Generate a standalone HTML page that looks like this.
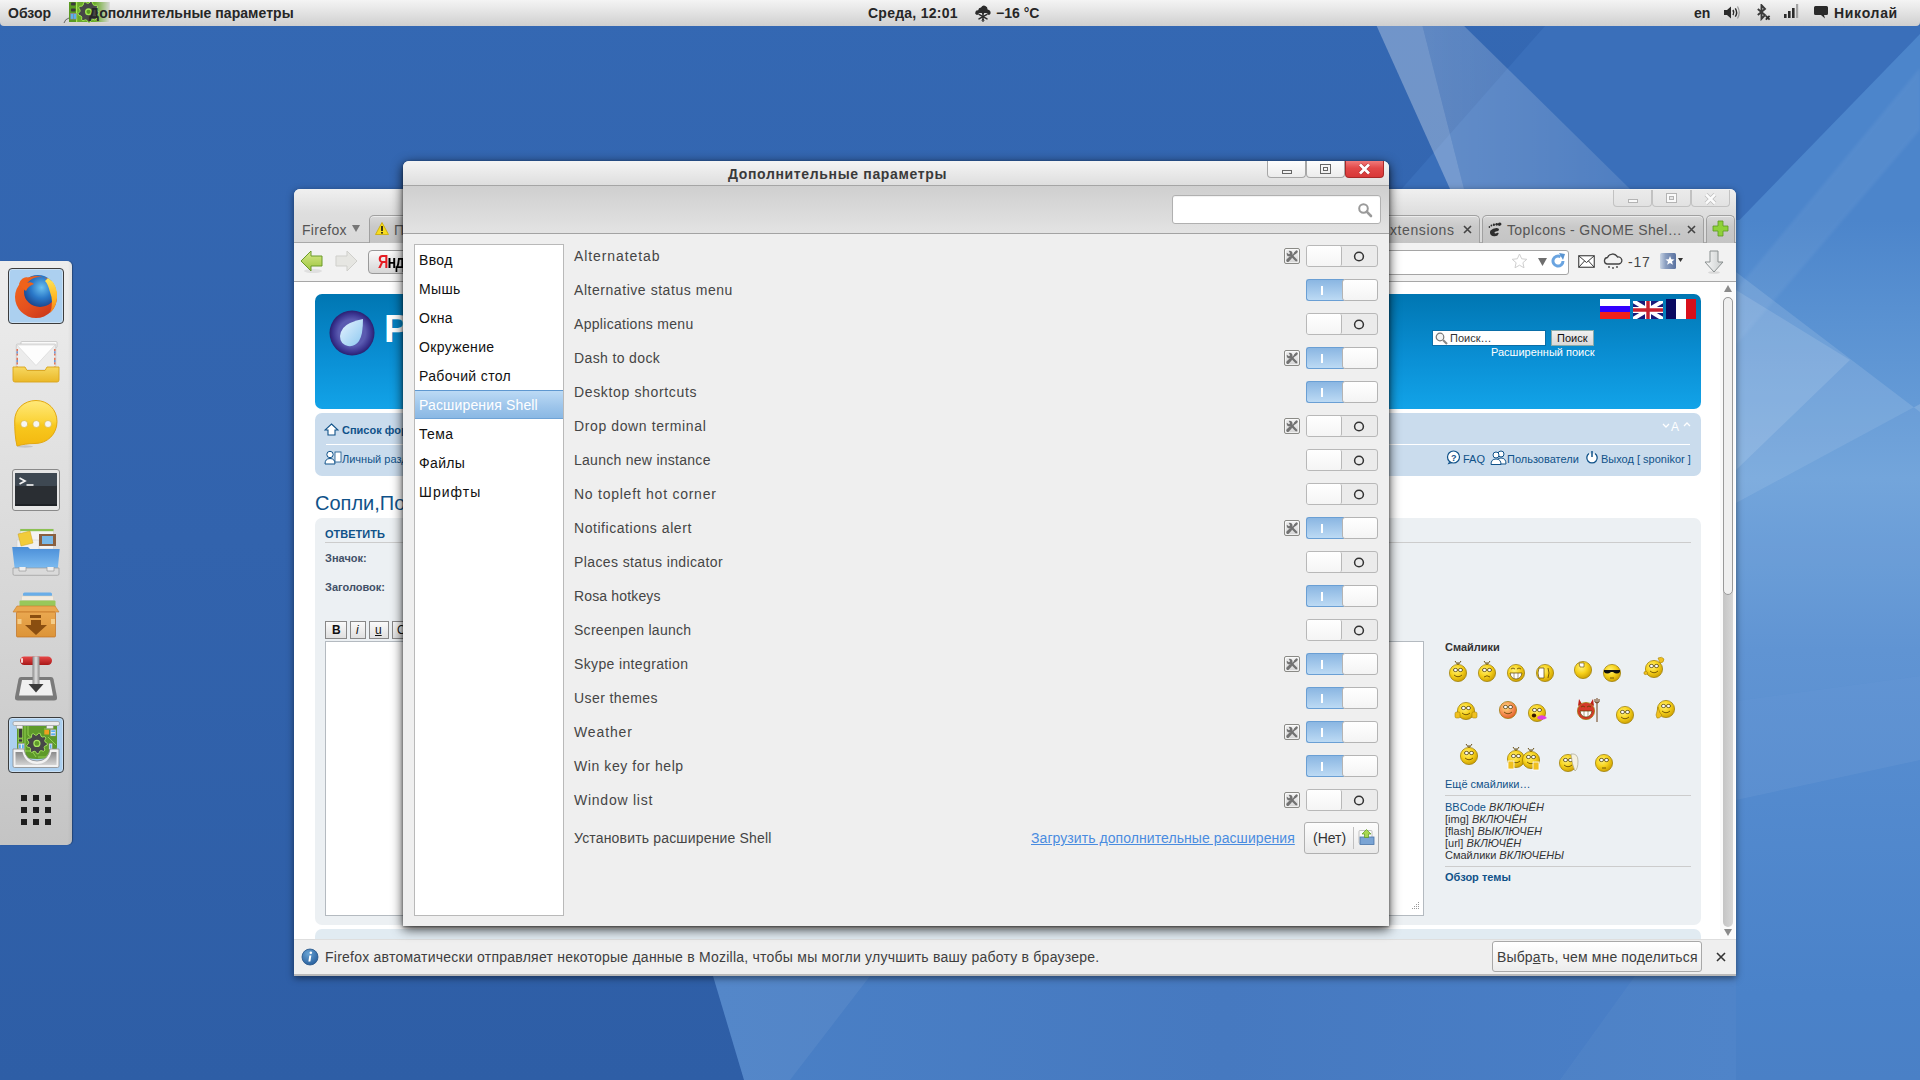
<!DOCTYPE html>
<html><head><meta charset="utf-8">
<style>
*{box-sizing:border-box}
html,body{margin:0;padding:0}
body{width:1920px;height:1080px;overflow:hidden;position:relative;background:#356bb2;font-family:"Liberation Sans",sans-serif}
.a{position:absolute}
.nw{white-space:nowrap}
#bg{position:absolute;left:0;top:0}
/* top panel */
#panel{position:absolute;left:0;top:0;width:1920px;height:26px;background:linear-gradient(#f4f4f4,#e6e6e6 40%,#cfcfcf);border-radius:0 0 4px 4px;color:#262626;font-size:14px}
#panel .t{position:absolute;top:5px;white-space:nowrap}
/* dock */
#dock{position:absolute;left:0;top:261px;width:72px;height:584px;background:linear-gradient(90deg,rgba(0,0,0,0) 94%,rgba(0,0,0,.05)),linear-gradient(#ededed,#e8e8e8 15%,#d6d6d6 60%,#c4c4c4);border-radius:0 5px 5px 0;box-shadow:1px 0 1px rgba(0,0,0,.3)}
#dock .sel{position:absolute;left:8px;width:56px;height:56px;border:1.5px solid #3c3c3c;border-radius:4px;background:#acd0f0;box-shadow:inset 0 0 0 1px rgba(255,255,255,.35)}
/* firefox */
#ff{position:absolute;left:294px;top:189px;width:1442px;height:787px;background:#f2f2f2;border-radius:6px 6px 0 0;box-shadow:0 2px 7px rgba(0,0,0,.5);border-bottom:2px solid #b9b9b9}
/* dialog */
#dlg{position:absolute;left:403px;top:161px;width:986px;height:765px;background:#efefef;border-radius:6px 6px 0 0;box-shadow:0 3px 12px rgba(0,0,0,.8),0 1px 3px rgba(0,0,0,.45)}
#dlg .title{position:absolute;left:0;top:0;width:986px;height:25px;background:linear-gradient(#f4f4f4,#dedede);border-radius:6px 6px 0 0;border-bottom:1px solid #a5a5a5}
#dlg .tb{position:absolute;left:0;top:25px;width:986px;height:48px;background:linear-gradient(#cfcfcf,#e3e3e3);border-bottom:1px solid #a3a3a3}
.row{position:absolute;left:171px;font-size:14px;color:#454545;letter-spacing:.55px;white-space:nowrap}
.sw{position:absolute;left:903px;width:72px;height:22px;border:1px solid #b8b8b8;border-radius:3px;background:#ebebeb}
.sw .k{position:absolute;top:0;height:20px;width:35px;background:linear-gradient(#fff,#f5f5f5);border-radius:2px}
.sw.off .k{left:0;border-right:1px solid #b8b8b8}
.sw .o{position:absolute;left:47px;top:5px;width:11px;height:11px;border:1.7px solid #2a2a2a;border-radius:50%}
.sw.on{border:none;background:transparent}
.sw.on .bl{position:absolute;left:0;top:0;width:38px;height:22px;background:linear-gradient(#8ab6e2,#bcdaf4);border:1px solid #6a9fd4;border-right:none;border-radius:3px 0 0 3px}
.sw.on .bl:after{content:"";position:absolute;left:14px;top:6px;width:1.6px;height:9px;background:#fff}
.sw.on .k{left:36px;top:0;width:36px;height:22px;border:1px solid #b4b4b4;border-radius:3px;background:linear-gradient(#fff,#f4f4f4)}
.gear{position:absolute;left:881px;width:16px;height:16px;border:1px solid #8a8a86;border-radius:2px;background:linear-gradient(#f4f4f4,#d6d6d6);box-shadow:inset 0 0 0 1px rgba(255,255,255,.6)}
.side{position:absolute;left:11px;top:83px;width:150px;height:672px;background:#fff;border:1px solid #b9b9b9}
.side .it{position:absolute;left:5px;font-size:14px;color:#111;letter-spacing:.35px;white-space:nowrap}
.wb{position:absolute;top:0;height:17px;border:1px solid #a7a7a7;border-top:none;background:linear-gradient(#fdfdfd,#ececec)}
</style></head>
<body>
<svg id="bg" width="1920" height="1080" viewBox="0 0 1920 1080">
<defs>
<linearGradient id="bgg" x1="0" y1="0" x2="0" y2="1">
<stop offset="0" stop-color="#3468b3"/><stop offset=".5" stop-color="#3263ad"/><stop offset="1" stop-color="#2e5ea6"/>
</linearGradient>
<linearGradient id="rs" x1="0" y1="0" x2="0" y2="1">
<stop offset="0" stop-color="#4c85cb"/><stop offset=".12" stop-color="#5a92d2"/><stop offset=".3" stop-color="#6ea2da"/><stop offset=".5" stop-color="#5a90d2"/><stop offset=".9" stop-color="#4a82c9"/><stop offset="1" stop-color="#4a80c6"/>
</linearGradient>
<linearGradient id="bt" x1="0" y1="0" x2="1" y2="0">
<stop offset="0" stop-color="#4a80c6"/><stop offset=".5" stop-color="#4679c0"/><stop offset="1" stop-color="#4a80c8"/>
</linearGradient>
<linearGradient id="beam" x1="0" y1="0" x2="1" y2="0"><stop offset="0" stop-color="#fff" stop-opacity=".24"/><stop offset="1" stop-color="#fff" stop-opacity=".12"/></linearGradient>
<filter id="soft" x="-10%" y="-10%" width="120%" height="120%"><feGaussianBlur stdDeviation="1.5"/></filter>
</defs>
<rect width="1920" height="1080" fill="url(#bgg)"/>
<polygon points="1545,26 1920,26 1920,976 709,976" fill="#3a6fba"/>
<polygon points="1920,34 1920,976 1006,976" fill="#4c85cb"/>
<polygon points="1421,20 1458,20 1630,189 1464,189" fill="url(#beam)" opacity=".9"/>
<polygon points="1374,20 1421,20 1464,189 1450,189" fill="#fff" opacity=".3"/>
<rect x="1736" y="220" width="184" height="860" fill="url(#rs)"/>
<polygon points="1920,68 1920,130 1736,345 1736,290" fill="#fff" opacity=".05" filter="url(#soft)"/>
<polygon points="1736,272 1920,412 1920,404 1736,503" fill="#fff" opacity=".12"/>
<polygon points="1736,290 1850,360 1736,470" fill="#fff" opacity=".12"/>
<polygon points="1736,503 1920,404 1920,676 1736,701" fill="#fff" opacity=".04"/>
<polygon points="1736,701 1920,676 1920,760 1736,800" fill="#fff" opacity=".05"/>
<!-- bottom -->
<polygon points="713,976 1736,976 1736,1080 744,1080" fill="url(#bt)"/>
<polygon points="713,976 870,976 790,1080 744,1080" fill="#fff" opacity=".06"/>
<polygon points="1635,976 1736,976 1736,1080 1560,1080" fill="#fff" opacity=".03"/>
</svg>
<div id="panel">
  <div class="t" style="left:8px;font-weight:bold">Обзор</div>
  <svg class="a" style="left:62px;top:2px" width="48" height="21" viewBox="0 0 48 21">
    <defs><linearGradient id="fadeg" x1="0" x2="1"><stop offset="0" stop-color="#dcdcdc" stop-opacity="0"/><stop offset="1" stop-color="#d8d8d8" stop-opacity="1"/></linearGradient></defs>
    <rect x="7" y="0" width="40" height="20" fill="#6aaa2a"/>
    <rect x="7" y="0" width="8" height="20" fill="#5a9a22"/>
    <rect x="14" y="0" width="1.2" height="20" fill="#a8e850"/>
    <rect x="9" y="0.5" width="4.5" height="3" rx=".8" fill="#3a3a3a"/><rect x="9" y="6.5" width="4.5" height="3" rx=".8" fill="#3a3a3a"/>
    <rect x="8.2" y="11" width="6.4" height="6.5" fill="#888"/>
    <rect x="8.8" y="12" width="2.3" height="4.8" fill="#5ab0f0"/><rect x="11.8" y="12" width="2.3" height="4.8" fill="#5ab0f0"/>
    <path d="M28.59,-0.49 L30.34,0.03 L30.99,2.46 L32.19,3.35 L34.71,3.26 L35.72,4.78 L34.65,7.07 L35.00,8.52 L37.00,10.07 L36.79,11.89 L34.50,12.95 L33.84,14.29 L34.37,16.75 L33.04,18.01 L30.61,17.35 L29.23,17.95 L28.06,20.18 L26.23,20.30 L24.79,18.23 L23.35,17.80 L21.02,18.76 L19.55,17.67 L19.77,15.16 L18.95,13.91 L16.54,13.14 L16.12,11.36 L17.90,9.58 L18.07,8.09 L16.73,5.96 L17.54,4.32 L20.05,4.11 L21.14,3.07 L21.48,0.58 L23.16,-0.16 L25.22,1.30 L26.72,1.20 Z" fill="#474747" stroke="#a0e850" stroke-width="1"/>
    <circle cx="26.5" cy="9.8" r="2.8" fill="#5a9a22" stroke="#a0e850" stroke-width="1.4"/>
    <rect x="33" y="0" width="15" height="21" fill="url(#fadeg)"/>
    <path d="M2,21 Q3,17 7,16" stroke="#666" fill="none" stroke-width="1"/>
  </svg>
  <div class="t" style="left:89px;font-weight:bold;letter-spacing:.05px">Дополнительные параметры</div>
  <div class="t" style="left:868px;font-weight:bold;letter-spacing:.25px">Среда, 12:01</div>
  <svg class="a" style="left:974px;top:3px" width="18" height="19" viewBox="0 0 18 19">
    <path d="M2.3,11.8 Q0.3,10.5 1.6,8.4 Q2.4,7.2 4,7.4 Q4.6,4.6 7,4.6 Q8.6,1.8 11.4,2.9 Q13.6,3.8 13.6,6.6 Q16.8,7.2 16.6,10.2 Q16.4,12 14.6,12 L12.8,10 H5.2 L3.4,12 Z" fill="#2b2b2b"/>
    <g stroke="#2b2b2b" stroke-width="1.5" stroke-linecap="round"><line x1="9" y1="9" x2="9" y2="18.2"/><line x1="5" y1="11.3" x2="13" y2="15.9"/><line x1="13" y1="11.3" x2="5" y2="15.9"/></g>
    <g stroke="#2b2b2b" stroke-width="1" fill="none"><path d="M7.6,9.8 L9,11 L10.4,9.8 M7.6,17.4 L9,16.2 L10.4,17.4"/></g>
  </svg>
  <div class="t" style="left:996px;font-weight:bold">−16 °C</div>
  <div class="t" style="left:1694px;font-weight:bold">en</div>
  <svg class="a" style="left:1723px;top:5px" width="17" height="15" viewBox="0 0 17 15">
    <path d="M1,5 H4 L8,1.5 V13.5 L4,10 H1 Z" fill="#2b2b2b"/>
    <path d="M10,5 Q11.5,7.5 10,10" stroke="#2b2b2b" stroke-width="1.6" fill="none"/>
    <path d="M12.3,3.3 Q15,7.5 12.3,11.7" stroke="#2b2b2b" stroke-width="1.4" fill="none"/>
    <path d="M14.5,1.5 Q18,7.5 14.5,13.5" stroke="#9a9a9a" stroke-width="1.2" fill="none"/>
  </svg>
  <svg class="a" style="left:1755px;top:4px" width="17" height="17" viewBox="0 0 17 17">
    <path d="M2.8,5 L10,11 L6.5,14.8 V1.2 L10,5 L2.8,11" stroke="#3a3a3a" stroke-width="1.9" fill="none"/>
    <path d="M10.8,11.8 L14.6,15.6 M14.6,11.8 L10.8,15.6" stroke="#2b2b2b" stroke-width="1.8"/>
  </svg>
  <svg class="a" style="left:1783px;top:3px" width="17" height="17" viewBox="0 0 17 17">
    <rect x="1" y="11" width="2.6" height="4" fill="#2b2b2b"/><rect x="5" y="8" width="2.6" height="7" fill="#2b2b2b"/>
    <rect x="9" y="5" width="2.6" height="10" fill="#2b2b2b"/><rect x="13" y="1" width="2.2" height="14" fill="#a3a3a3"/>
  </svg>
  <svg class="a" style="left:1813px;top:5px" width="16" height="15" viewBox="0 0 16 15">
    <path d="M2.5,1 H13.5 Q15,1 15,2.5 V8.5 Q15,10 13.5,10 H11 L12,13.5 L8,10 H2.5 Q1,10 1,8.5 V2.5 Q1,1 2.5,1 Z" fill="#2b2b2b"/>
  </svg>
  <div class="t" style="left:1834px;font-weight:bold;letter-spacing:.7px">Николай</div>
</div>
<div id="dock">
  <div class="sel" style="top:7px"></div>
  <!-- firefox -->
  <svg class="a" style="left:12px;top:11px" width="48" height="48" viewBox="0 0 48 48">
    <defs>
      <radialGradient id="ffglobe" cx=".6" cy=".35" r=".6"><stop offset="0" stop-color="#6ac0f0"/><stop offset=".5" stop-color="#2a78c8"/><stop offset="1" stop-color="#1a3c80"/></radialGradient>
      <linearGradient id="fffox" x1="0" y1="0" x2=".8" y2="1"><stop offset="0" stop-color="#f26a1c"/><stop offset=".6" stop-color="#e5501e"/><stop offset="1" stop-color="#c8361a"/></linearGradient>
      <linearGradient id="fftail" x1="0" y1="0" x2="0" y2="1"><stop offset="0" stop-color="#ffe55a"/><stop offset=".6" stop-color="#ffb41e"/><stop offset="1" stop-color="#f57a1c"/></linearGradient>
    </defs>
    <circle cx="26" cy="21" r="18" fill="url(#ffglobe)"/>
    <path fill-rule="evenodd" d="M3,25 A21,21 0 1 0 45,25 A21,21 0 1 0 3,25 Z M12,20 A16,15 0 1 0 44,20 A16,15 0 1 0 12,20 Z" fill="url(#fffox)"/>
    <path d="M7,12 Q9,5 16,5 Q13,8 15,11 Q19,9 22,12 Q16,14 14,19 Q10,17 7,12 Z" fill="#f0621a"/>
    <path d="M36,6 Q46,12 45,26 Q44,36 38,41 Q42,30 38,20 Q36,12 33,9 Z" fill="url(#fftail)"/>
  </svg>
  <!-- mail -->
  <svg class="a" style="left:12px;top:80px" width="48" height="44" viewBox="0 0 48 44">
    <defs><linearGradient id="trayy" x1="0" y1="0" x2="0" y2="1"><stop offset="0" stop-color="#f7d860"/><stop offset="1" stop-color="#eab828"/></linearGradient></defs>
    <rect x="9" y="0.5" width="36" height="6" rx="1" fill="#fafafa" stroke="#bbb" stroke-width=".7"/>
    <rect x="4.3" y="3" width="39.5" height="26" rx="1" fill="#ececec" stroke="#c4c4c4" stroke-width=".7"/>
    <path d="M5,4 L24,24.5 L43,4 Z" fill="#fdfdfd" stroke="#d4d4d4" stroke-width=".6"/>
    <path d="M5.2,8 V27 M42.8,8 V27" stroke="#e06040" stroke-dasharray="2.2,2.2" stroke-width="1.3"/>
    <path d="M5.2,10.2 V27 M42.8,10.2 V27" stroke="#5a8ad8" stroke-dasharray="2.2,6.6" stroke-width="1.3"/>
    <path d="M1,26 H13 L15,29.5 H33 L35,26 H47 V39 Q47,41 45,41 H3 Q1,41 1,39 Z" fill="url(#trayy)" stroke="#d9a41c" stroke-width=".9"/>
  </svg>
  <!-- chat -->
  <svg class="a" style="left:13px;top:139px" width="46" height="48" viewBox="0 0 46 48">
    <defs><linearGradient id="chatg" x1="0" y1="0" x2="0" y2="1"><stop offset="0" stop-color="#ffe97a"/><stop offset=".45" stop-color="#fbd43a"/><stop offset=".55" stop-color="#f8c81e"/><stop offset="1" stop-color="#f3b810"/></linearGradient></defs>
    <ellipse cx="12" cy="46.5" rx="8" ry="1.2" fill="#000" opacity=".12"/>
    <path d="M4,46 C2,38 1.7,28 1.7,21 C1.7,9 11,0.5 23,0.5 C35,0.5 44,9.5 44,21.5 C44,34 34.5,43.5 22,43.5 C15,43.5 9,44.5 4,46 Z" fill="url(#chatg)" stroke="#e2a812" stroke-width="1"/>
    <circle cx="11.2" cy="24" r="3.5" fill="#f6f6f6" stroke="#d9b440" stroke-width=".7"/><circle cx="23.3" cy="24" r="3.5" fill="#f6f6f6" stroke="#d9b440" stroke-width=".7"/><circle cx="35" cy="24" r="3.5" fill="#f6f6f6" stroke="#d9b440" stroke-width=".7"/>
  </svg>
  <!-- terminal -->
  <svg class="a" style="left:12px;top:208px" width="48" height="42" viewBox="0 0 48 42">
    <rect x="0.5" y="0.5" width="47" height="41" rx="2.5" fill="#e6e6e6" stroke="#8a8a8a"/>
    <rect x="3" y="4" width="42" height="33" rx="1" fill="#2a2e33"/>
    <rect x="3" y="4" width="42" height="13" rx="1" fill="#3e4852"/>
    <rect x="3" y="35" width="42" height="2" fill="#1e2226"/>
    <path d="M7.5,9 L13,12 L7.5,15" stroke="#f4f4f4" stroke-width="1.7" fill="none"/><rect x="14.5" y="15.2" width="7" height="1.6" fill="#f4f4f4"/>
  </svg>
  <!-- files -->
  <svg class="a" style="left:11px;top:267px" width="50" height="48" viewBox="0 0 50 48">
    <defs><linearGradient id="fldg" x1="0" y1="0" x2="0" y2="1"><stop offset="0" stop-color="#4a8ed8"/><stop offset="1" stop-color="#84c2f4"/></linearGradient></defs>
    <rect x="9.2" y="1" width="33.3" height="20" fill="#f4f4f4" stroke="#ccc" stroke-width=".6"/>
    <rect x="9.2" y="1" width="33.3" height="2.2" fill="#8cc152"/>
    <rect x="6" y="12" width="22" height="10" fill="#f0f0f0" stroke="#ccc" stroke-width=".5"/>
    <path d="M7,6 L19,3 L22,15 L10,18 Z" fill="#f2cc3a" stroke="#c8a020" stroke-width=".5"/>
    <rect x="28" y="6" width="17" height="12" fill="#8a6040"/>
    <rect x="31" y="8" width="11" height="8" fill="#78b8e8"/>
    <path d="M1.2,19 H17 L19,21 H48.7 L46.5,43.4 H4 Z" fill="url(#fldg)"/>
    <path d="M2,40 H48 V46 Q48,47.3 46.5,47.3 H3.5 Q2,47.3 2,46 Z" fill="#dadada" stroke="#999" stroke-width=".7"/>
    <path d="M8,39 V43 H15 V39 M36,39 V43 H43 V39" stroke="#999" stroke-width=".7" fill="#eee"/>
  </svg>
  <!-- archive -->
  <svg class="a" style="left:11px;top:331px" width="50" height="48" viewBox="0 0 50 48">
    <defs><linearGradient id="boxg" x1="0" y1="0" x2="0" y2="1"><stop offset="0" stop-color="#eaa850"/><stop offset="1" stop-color="#dc9438"/></linearGradient></defs>
    <rect x="12" y="0.5" width="29" height="4" rx="1.5" fill="#6aaee8"/>
    <rect x="10.5" y="4" width="32" height="4.5" rx="1" fill="#f2ebe0" stroke="#d8ccb8" stroke-width=".5"/>
    <rect x="8.5" y="8.5" width="36" height="7" rx="1" fill="#98c85a"/>
    <path d="M2,20 L6,14 H44 L48,20 Z" fill="#eaa850" stroke="#c87a28" stroke-width=".6"/>
    <rect x="5.5" y="20" width="39" height="25" rx="1" fill="url(#boxg)" stroke="#c07020" stroke-width=".7"/>
    <rect x="6.5" y="27" width="4" height="5" fill="#f4cc88"/><rect x="40" y="27" width="4" height="5" fill="#f4cc88"/>
    <rect x="19" y="23" width="11" height="3" fill="#8a4e10"/>
    <path d="M20,28 H30 V33 H36 L25,43 L14,33 H20 Z" fill="#8a4e10"/>
  </svg>
  <!-- install -->
  <svg class="a" style="left:12px;top:394px" width="48" height="48" viewBox="0 0 48 48">
    <defs><linearGradient id="instg" x1="0" y1="0" x2="1" y2="0"><stop offset="0" stop-color="#8a8a8a"/><stop offset=".5" stop-color="#e0e0e0"/><stop offset="1" stop-color="#8a8a8a"/></linearGradient>
    <linearGradient id="redg" x1="0" y1="0" x2="0" y2="1"><stop offset="0" stop-color="#e84848"/><stop offset="1" stop-color="#a81818"/></linearGradient></defs>
    <path d="M9,22 H39 Q41,22 41.5,24 L45,42 Q45.5,45.5 42,45.5 H6 Q2.5,45.5 3,42 L6.5,24 Q7,22 9,22 Z" fill="#7a7a7a"/>
    <path d="M10,25 H38 L41,40.5 H7 Z" fill="#f0f0f0"/>
    <rect x="20.5" y="6" width="7" height="26" fill="url(#instg)"/>
    <path d="M16.5,29 H31.5 L24,37.5 Z" fill="#3a3a3a"/>
    <rect x="8" y="1.5" width="32" height="8.5" rx="4.2" fill="url(#redg)"/>
    <rect x="20.5" y="1.5" width="7" height="8.5" fill="url(#instg)"/>
    <rect x="9" y="3" width="2" height="5" rx="1" fill="#fff" opacity=".8"/>
  </svg>
  <!-- tweak selected -->
  <div class="sel" style="top:456px"></div>
  <svg class="a" style="left:12px;top:460px" width="48" height="48" viewBox="0 0 48 48">
    <defs><linearGradient id="trayg" x1="0" y1="0" x2="0" y2="1"><stop offset="0" stop-color="#8a8a8a"/><stop offset="1" stop-color="#d4d4d4"/></linearGradient></defs>
    <path d="M5,5 H45 V26 Q45,38 25,38 Q5,38 5,26 Z" fill="#5e9a2a"/>
    <g stroke="#a8e860" stroke-width=".7" fill="none">
      <path d="M13,5 V40 M16,5 V14 L20,17 M32,8 H40 M36,16 L44,24 M12,30 H20 L24,36 M40,28 L34,36 H26"/>
    </g>
    <rect x="6.5" y="7.5" width="4.2" height="9.5" fill="#3a3a3a" stroke="#a8e860" stroke-width=".6"/>
    <rect x="6.5" y="18" width="4.2" height="3" fill="#3a3a3a" stroke="#a8e860" stroke-width=".6"/>
    <path d="M26.66,12.15 L28.41,12.61 L29.02,15.19 L30.21,16.02 L32.84,15.68 L33.88,17.16 L32.69,19.53 L33.07,20.92 L35.30,22.35 L35.15,24.16 L32.71,25.20 L32.11,26.52 L32.90,29.05 L31.62,30.34 L29.08,29.57 L27.77,30.19 L26.75,32.63 L24.95,32.80 L23.50,30.58 L22.10,30.21 L19.74,31.43 L18.25,30.40 L18.57,27.76 L17.73,26.58 L15.14,26.00 L14.67,24.25 L16.60,22.44 L16.72,21.00 L15.11,18.89 L15.87,17.24 L18.52,17.09 L19.54,16.07 L19.66,13.42 L21.30,12.64 L23.42,14.23 L24.86,14.10 Z" fill="#474747" stroke="#a8e860" stroke-width=".9"/>
    <circle cx="24.9" cy="22.4" r="3" fill="#5e9a2a" stroke="#a8e860" stroke-width="1.2"/>
    <rect x="32.3" y="8.8" width="4.7" height="4.7" fill="#f0a020"/>
    <rect x="6.2" y="22.4" width="6.2" height="6" fill="#eee" stroke="#888" stroke-width=".5"/><rect x="7" y="23.5" width="1.8" height="4" fill="#5ab0f0"/><rect x="10" y="23.5" width="1.8" height="4" fill="#5ab0f0"/>
    <rect x="37" y="22.4" width="3.2" height="6" fill="#eee" stroke="#888" stroke-width=".5"/><rect x="37.8" y="23.5" width="1.6" height="4" fill="#5ab0f0"/>
    <rect x="38.4" y="8.5" width="5.5" height="6.5" fill="#eee" stroke="#888" stroke-width=".5"/><rect x="39.2" y="9.3" width="4" height="1.8" fill="#5ab0f0"/><rect x="39.2" y="12.3" width="4" height="1.8" fill="#5ab0f0"/>
    <rect x="1" y="0.5" width="46.5" height="4" rx="1.5" fill="#ececec" stroke="#9a9a9a" stroke-width=".7"/>
    <rect x="4.3" y="4.5" width="6.5" height="3" fill="#eee" stroke="#9a9a9a" stroke-width=".5"/><rect x="34.7" y="4.5" width="6.5" height="3" fill="#eee" stroke="#9a9a9a" stroke-width=".5"/>
    <path d="M1,28 H12 Q14,40 25,40 Q36,40 38,28 H47 V45 Q47,46.5 45.5,46.5 H2.5 Q1,46.5 1,45 Z" fill="#f2f2f2" stroke="#8a8a8a" stroke-width=".8"/>
    <path d="M3.5,31 H10.5 Q13.5,43 25,43 Q36.5,43 39.5,31 H44.5 V44 H3.5 Z" fill="url(#trayg)"/>
  </svg>
  <!-- grid -->
  <svg class="a" style="left:20px;top:533px" width="32" height="32" viewBox="0 0 32 32">
    <g fill="#1e1e1e">
    <rect x="1" y="1" width="6" height="6"/><rect x="13" y="1" width="6" height="6"/><rect x="25" y="1" width="6" height="6"/>
    <rect x="1" y="13" width="6" height="6"/><rect x="13" y="13" width="6" height="6"/><rect x="25" y="13" width="6" height="6"/>
    <rect x="1" y="25" width="6" height="6"/><rect x="13" y="25" width="6" height="6"/><rect x="25" y="25" width="6" height="6"/>
    </g>
  </svg>
</div>
<div id="ff">
  <!-- title+tab strip bg -->
  <div class="a" style="left:0;top:0;width:1442px;height:54px;background:linear-gradient(#f0f0f0,#dedede 45%,#d9d9d9);border-radius:6px 6px 0 0;border-bottom:1px solid #a9a9a9"></div>
  <!-- title buttons (inactive) -->
  <div class="a" style="left:1319px;top:1px;width:39px;height:17px;border:1px solid #c2c2c2;border-top:none;border-radius:0 0 4px 4px;background:linear-gradient(#ebebeb,#e2e2e2)"><div class="a" style="left:14px;top:9px;width:10px;height:4px;border:1px solid #b4b4b4;background:#fafafa"></div></div>
  <div class="a" style="left:1358px;top:1px;width:39px;height:17px;border:1px solid #c2c2c2;border-top:none;border-radius:0 0 4px 4px;background:linear-gradient(#ebebeb,#e2e2e2)"><div class="a" style="left:13px;top:3px;width:11px;height:10px;border:1px solid #b4b4b4;background:#fafafa"><div class="a" style="left:2px;top:2px;width:5px;height:4px;border:1px solid #b4b4b4;background:#e6e6e6"></div></div></div>
  <div class="a" style="left:1397px;top:1px;width:39px;height:17px;border:1px solid #c2c2c2;border-top:none;border-radius:0 0 4px 4px;background:linear-gradient(#ebebeb,#e2e2e2)"><svg class="a" style="left:12px;top:3px" width="13" height="12" viewBox="0 0 13 12"><path d="M2,1.5 L11,10.5 M11,1.5 L2,10.5" stroke="#bdbdbd" stroke-width="4"/><path d="M2,1.5 L11,10.5 M11,1.5 L2,10.5" stroke="#fbfbfb" stroke-width="2.6"/></svg></div>
  <div class="a nw" style="left:8px;top:33px;font-size:14px;color:#555;letter-spacing:.3px">Firefox</div>
  <svg class="a" style="left:58px;top:36px" width="8" height="8" viewBox="0 0 8 8"><path d="M0,0 H8 L4,7 Z" fill="#777"/></svg>
  <!-- tab 1 (behind dialog) -->
  <div class="a" style="left:75px;top:26px;width:60px;height:28px;background:linear-gradient(#d8d8d8,#c9c9c9 40%,#c4c4c4);border:1px solid #a0a0a0;border-bottom:none;border-radius:5px 5px 0 0;box-shadow:inset 0 1px 0 rgba(255,255,255,.5)"></div>
  <svg class="a" style="left:81px;top:33px" width="14" height="13" viewBox="0 0 14 13"><path d="M7,0.5 L13.5,12.5 H0.5 Z" fill="#f7dc20" stroke="#c9a800" stroke-width=".8"/><rect x="6.2" y="4" width="1.6" height="5" fill="#111"/><rect x="6.2" y="10" width="1.6" height="1.6" fill="#111"/></svg>
  <div class="a nw" style="left:100px;top:33px;font-size:14px;color:#555">П</div>
  <!-- tab xtensions -->
  <div class="a" style="left:1060px;top:26px;width:126px;height:28px;background:linear-gradient(#d8d8d8,#c9c9c9 40%,#c4c4c4);border:1px solid #a0a0a0;border-bottom:none;border-radius:5px 5px 0 0;box-shadow:inset 0 1px 0 rgba(255,255,255,.5)"></div>
  <div class="a nw" style="left:1096px;top:33px;font-size:14px;color:#555;letter-spacing:.6px">xtensions</div>
  <svg class="a" style="left:1169px;top:36px" width="9" height="9" viewBox="0 0 9 9"><path d="M1,1 L8,8 M8,1 L1,8" stroke="#444" stroke-width="1.6"/></svg>
  <!-- tab topicons -->
  <div class="a" style="left:1188px;top:26px;width:222px;height:28px;background:linear-gradient(#d8d8d8,#c9c9c9 40%,#c4c4c4);border:1px solid #a0a0a0;border-bottom:none;border-radius:5px 5px 0 0;box-shadow:inset 0 1px 0 rgba(255,255,255,.5)"></div>
  <svg class="a" style="left:1194px;top:33px" width="14" height="15" viewBox="0 0 14 15"><g fill="#2e2e2e"><ellipse cx="1.4" cy="5" rx=".8" ry=".9"/><ellipse cx="3.4" cy="3.6" rx=".9" ry="1"/><ellipse cx="5.9" cy="2.7" rx="1.1" ry="1.2"/><ellipse cx="8.7" cy="2.3" rx="1.3" ry="1.4"/><ellipse cx="11.6" cy="2.2" rx="1.8" ry="1.6" transform="rotate(-30 11.6 2.2)"/><path d="M2.5,8.5 Q5,5.8 9,6 Q11.5,6.3 11,8 Q10.5,9.3 8,9.6 Q6.3,9.9 6.5,11 Q7,12 9.5,10.8 Q10.8,10.3 10.6,11.8 Q9.8,14.5 6.2,14.3 Q2.3,14 2,11 Q1.8,9.6 2.5,8.5 Z"/></g></svg>
  <div class="a nw" style="left:1213px;top:33px;font-size:14px;color:#555;letter-spacing:.35px">TopIcons - GNOME Shel…</div>
  <svg class="a" style="left:1393px;top:36px" width="9" height="9" viewBox="0 0 9 9"><path d="M1,1 L8,8 M8,1 L1,8" stroke="#444" stroke-width="1.6"/></svg>
  <!-- new tab -->
  <div class="a" style="left:1412px;top:26px;width:29px;height:28px;background:linear-gradient(#d8d8d8,#c9c9c9 40%,#c4c4c4);border:1px solid #a0a0a0;border-bottom:none;border-radius:5px 5px 0 0;box-shadow:inset 0 1px 0 rgba(255,255,255,.5)"></div>
  <svg class="a" style="left:1418px;top:31px" width="17" height="17" viewBox="0 0 17 17"><path d="M6,1 H11 V6 H16 V11 H11 V16 H6 V11 H1 V6 H6 Z" fill="#8fd13a" stroke="#5a9a1e" stroke-width=".8"/></svg>
  <!-- nav bar -->
  <div class="a" style="left:0;top:54px;width:1442px;height:39px;background:#f2f2f2;border-bottom:1px solid #a7a7a7"></div>
  <svg class="a" style="left:6px;top:61px" width="24" height="24" viewBox="0 0 24 24"><defs><linearGradient id="bkg" x1="0" y1="0" x2="0" y2="1"><stop offset="0" stop-color="#d8ea8a"/><stop offset="1" stop-color="#9cc43e"/></linearGradient></defs><ellipse cx="13" cy="21" rx="9" ry="2" fill="#000" opacity=".08"/><path d="M1,11 L11,1 V6 H22 V16 H11 V21 Z" fill="url(#bkg)" stroke="#6a9a2a" stroke-width="1"/></svg>
  <svg class="a" style="left:40px;top:61px" width="24" height="24" viewBox="0 0 24 24"><path d="M23,11 L13,1 V6 H2 V16 H13 V21 Z" fill="#e6e6e2" stroke="#cfcfcb" stroke-width="1"/></svg>
  <div class="a" style="left:74px;top:61px;width:60px;height:24px;border:1px solid #9a9a9a;border-radius:4px;background:linear-gradient(#fafafa,#d6d6d6)"></div>
  <div class="a nw" style="left:84px;top:63px;font-size:18px;font-weight:bold;letter-spacing:-1px;transform:scaleX(.8);transform-origin:0 0"><span style="color:#e51c23">Я</span>нд</div>
  <!-- url bar -->
  <div class="a" style="left:1000px;top:61px;width:275px;height:25px;background:#fff;border:1px solid #a5a5a5;border-radius:3px"></div>
  <svg class="a" style="left:1217px;top:64px" width="17" height="16" viewBox="0 0 17 16"><path d="M8.5,1 L10.7,5.8 L15.8,6.3 L11.9,9.7 L13,14.8 L8.5,12.2 L4,14.8 L5.1,9.7 L1.2,6.3 L6.3,5.8 Z" fill="#fff" stroke="#cfcfcf" stroke-width="1"/></svg>
  <svg class="a" style="left:1244px;top:69px" width="9" height="8" viewBox="0 0 9 8"><path d="M0,0 H9 L4.5,8 Z" fill="#6e6e6e"/></svg>
  <svg class="a" style="left:1256px;top:64px" width="16" height="16" viewBox="0 0 16 16"><path d="M13,8 A5,5 0 1 1 10.5,3.7" stroke="#6aa4e0" stroke-width="3" fill="none"/><path d="M9,0 L15,1 L13,7 Z" fill="#5a94d0"/></svg>
  <svg class="a" style="left:1284px;top:66px" width="17" height="13" viewBox="0 0 17 13"><rect x=".75" y=".75" width="15.5" height="11.5" fill="#fff" stroke="#3a3a3a" stroke-width="1.1"/><path d="M1,1 L8.5,7.5 L16,1 M1,12 L6.5,6 M16,12 L10.5,6" stroke="#3a3a3a" stroke-width="1" fill="none"/></svg>
  <svg class="a" style="left:1309px;top:64px" width="20" height="17" viewBox="0 0 20 17"><path d="M4,11 A3.3,3.3 0 0 1 4.5,4.5 A5.5,5.5 0 0 1 14.5,4 A3.5,3.5 0 0 1 16,11 Z" fill="none" stroke="#444" stroke-width="1.3"/><g fill="#444"><circle cx="6" cy="14" r=".9"/><circle cx="10" cy="15" r=".9"/><circle cx="14" cy="14" r=".9"/></g></svg>
  <div class="a nw" style="left:1334px;top:65px;font-size:14px;color:#444;letter-spacing:.8px">-17</div>
  <svg class="a" style="left:1366px;top:64px" width="24" height="17" viewBox="0 0 24 17"><defs><linearGradient id="bmg" x1="0" y1="0" x2="1" y2="0"><stop offset="0" stop-color="#c8d4e4"/><stop offset=".35" stop-color="#8a9ec0"/><stop offset="1" stop-color="#5a72a0"/></linearGradient></defs><rect x="0" y="0" width="16" height="16" rx="1.5" fill="url(#bmg)"/><path d="M10,3 L11.3,6.2 L14.6,6.4 L12,8.5 L12.9,11.8 L10,10 L7.1,11.8 L8,8.5 L5.4,6.4 L8.7,6.2 Z" fill="#fff"/><path d="M18,5 H23 L20.5,9 Z" fill="#333"/></svg>
  <svg class="a" style="left:1410px;top:61px" width="20" height="24" viewBox="0 0 20 24"><defs><linearGradient id="dlg2" x1="0" y1="0" x2="1" y2="0"><stop offset="0" stop-color="#fafafa"/><stop offset="1" stop-color="#c8cccc"/></linearGradient></defs><ellipse cx="10" cy="22.5" rx="6" ry="1.3" fill="#000" opacity=".1"/><path d="M6,1 H14 V12 H19 L10,22 L1,12 H6 Z" fill="url(#dlg2)" stroke="#8a9090" stroke-width="1"/></svg>
  <!-- content -->
  <div class="a" style="left:0;top:93px;width:1442px;height:657px;background:#fff;overflow:hidden">
    <!-- header -->
    <div class="a" style="left:21px;top:12px;width:1386px;height:115px;border-radius:7px;background:linear-gradient(#0076b2,#0a8fd4 55%,#12a3e8)"></div>
    <svg class="a" style="left:35px;top:27px" width="48" height="48" viewBox="0 0 48 48"><defs><radialGradient id="lgr" cx=".5" cy=".5" r=".5"><stop offset=".6" stop-color="#5a5ab0"/><stop offset=".85" stop-color="#3a3490"/><stop offset="1" stop-color="#2a2070"/></radialGradient><linearGradient id="lgd" x1="0" y1="0" x2="1" y2="1"><stop offset="0" stop-color="#e8f4ff"/><stop offset="1" stop-color="#8cc8f0"/></linearGradient></defs><circle cx="23" cy="24" r="22.5" fill="url(#lgr)"/><path d="M34,10 Q34,26 30,32 Q26,38 19,37 Q11,35 11,27 Q12,18 21,14 Q28,11 34,10 Z" fill="url(#lgd)"/></svg>
    <div class="a nw" style="left:90px;top:26px;font-size:38px;font-weight:bold;color:#fff">P</div>
    <!-- flags -->
    <div class="a" style="left:1306px;top:17px;width:30px;height:20px;background:linear-gradient(#fff 33%,#3300ff 33%,#3300ff 66%,#f02018 66%)"></div>
    <svg class="a" style="left:1339px;top:19px" width="30" height="18" viewBox="0 0 30 18"><rect width="30" height="18" fill="#1a1a7a"/><path d="M0,0 L30,18 M30,0 L0,18" stroke="#fff" stroke-width="4"/><path d="M15,0 V18 M0,9 H30" stroke="#fff" stroke-width="6"/><path d="M15,0 V18 M0,9 H30" stroke="#c8202e" stroke-width="3.4"/></svg>
    <div class="a" style="left:1372px;top:17px;width:30px;height:20px;background:linear-gradient(90deg,#0a0a60 33%,#fff 33%,#fff 66%,#d8101a 66%)"></div>
    <!-- search -->
    <div class="a" style="left:1138px;top:48px;width:114px;height:16px;background:#fff;border:1px solid #0a6ea8"></div>
    <svg class="a" style="left:1141px;top:50px" width="13" height="13" viewBox="0 0 13 13"><circle cx="5" cy="5" r="3.8" fill="#f4f4f4" stroke="#777" stroke-width="1.2"/><path d="M8,8 L12,12" stroke="#888" stroke-width="2.2"/></svg>
    <div class="a nw" style="left:1156px;top:50px;font-size:11px;color:#333">Поиск…</div>
    <div class="a" style="left:1257px;top:48px;width:43px;height:16px;background:linear-gradient(#f0f0f0,#d8d8d8);border:1px solid #8aa"></div>
    <div class="a nw" style="left:1263px;top:50px;font-size:11px;color:#111">Поиск</div>
    <div class="a nw" style="left:1197px;top:64px;font-size:11px;color:#fff">Расширенный поиск</div>
    <!-- nav box -->
    <div class="a" style="left:21px;top:131px;width:1386px;height:63px;border-radius:7px;background:#cadced"></div>
    <div class="a" style="left:32px;top:162px;width:1364px;height:1px;background:#fff"></div>
    <svg class="a" style="left:30px;top:141px" width="15" height="13" viewBox="0 0 15 13"><path d="M7.5,1 L14,7 H11 V12 H4 V7 H1 Z" fill="#fff" stroke="#105289" stroke-width="1.1"/></svg>
    <div class="a nw" style="left:48px;top:142px;font-size:11px;font-weight:bold;color:#105289">Список форумов</div>
    <svg class="a" style="left:30px;top:168px" width="18" height="15" viewBox="0 0 18 15"><circle cx="6" cy="4.5" r="3.2" fill="#fff" stroke="#105289"/><path d="M1,14 Q1,8.5 6,8.5 Q11,8.5 11,14 Z" fill="#fff" stroke="#105289"/><rect x="11" y="2" width="6" height="10" fill="#fff" stroke="#105289" stroke-width=".8"/></svg>
    <div class="a nw" style="left:48px;top:171px;font-size:11px;color:#105289">Личный раздел</div>
    <svg class="a" style="left:1368px;top:139px" width="29" height="10" viewBox="0 0 29 10"><path d="M1,3 L4,6 L7,3" stroke="#fff" stroke-width="1.3" fill="none"/><path d="M22,5 L25,2 L28,5" stroke="#fff" stroke-width="1.3" fill="none"/></svg>
    <div class="a nw" style="left:1377px;top:138px;font-size:12px;color:#fff">A</div>
    <svg class="a" style="left:1152px;top:168px" width="16" height="15" viewBox="0 0 16 15"><circle cx="7.5" cy="7" r="6" fill="#fff" stroke="#105289" stroke-width="1.2"/><path d="M3,12 L1.5,14.5 L6,13" fill="#105289"/><text x="5" y="10.5" font-size="9" font-weight="bold" fill="#105289" font-family="Liberation Sans">?</text></svg>
    <div class="a nw" style="left:1169px;top:171px;font-size:11px;color:#105289">FAQ</div>
    <svg class="a" style="left:1196px;top:168px" width="17" height="15" viewBox="0 0 17 15"><circle cx="11" cy="4" r="3" fill="#fff" stroke="#105289"/><path d="M6,14 Q6,8 11,8 Q16,8 16,14 Z" fill="#fff" stroke="#105289"/><circle cx="6" cy="5" r="3" fill="#fff" stroke="#105289"/><path d="M1,14.5 Q1,9 6,9 Q11,9 11,14.5 Z" fill="#fff" stroke="#105289"/></svg>
    <div class="a nw" style="left:1213px;top:171px;font-size:11px;color:#105289">Пользователи</div>
    <svg class="a" style="left:1291px;top:168px" width="14" height="14" viewBox="0 0 14 14"><path d="M4,3.5 A5.2,5.2 0 1 0 10,3.5" stroke="#105289" stroke-width="1.3" fill="#fff"/><path d="M7,1 V7" stroke="#105289" stroke-width="1.5"/></svg>
    <div class="a nw" style="left:1307px;top:171px;font-size:11px;color:#105289">Выход [ sponikor ]</div>
    <!-- title -->
    <div class="a nw" style="left:21px;top:210px;font-size:20px;color:#105289">Сопли,Поможет</div>
    <!-- post box -->
    <div class="a" style="left:21px;top:236px;width:1386px;height:407px;border-radius:7px;background:#ecf0f3"></div>
    <div class="a nw" style="left:31px;top:246px;font-size:11px;font-weight:bold;color:#105289">ОТВЕТИТЬ</div>
    <div class="a" style="left:31px;top:260px;width:1366px;height:1px;background:#ccc"></div>
    <div class="a nw" style="left:31px;top:270px;font-size:11px;font-weight:bold;color:#425067">Значок:</div>
    <div class="a nw" style="left:31px;top:299px;font-size:11px;font-weight:bold;color:#425067">Заголовок:</div>
    <div class="a" style="left:31px;top:339px;width:22px;height:18px;border:1px solid #888;background:linear-gradient(#fafafa,#e0e0e0)"><div class="a nw" style="left:6px;top:1px;font-size:12px;font-weight:bold;color:#111">B</div></div>
    <div class="a" style="left:56px;top:339px;width:16px;height:18px;border:1px solid #888;background:linear-gradient(#fafafa,#e0e0e0)"><div class="a nw" style="left:5px;top:1px;font-size:12px;font-style:italic;color:#111">i</div></div>
    <div class="a" style="left:75px;top:339px;width:20px;height:18px;border:1px solid #888;background:linear-gradient(#fafafa,#e0e0e0)"><div class="a nw" style="left:5px;top:1px;font-size:12px;text-decoration:underline;color:#111">u</div></div>
    <div class="a" style="left:98px;top:339px;width:30px;height:18px;border:1px solid #888;background:linear-gradient(#fafafa,#e0e0e0)"><div class="a nw" style="left:4px;top:1px;font-size:12px;color:#111">C</div></div>
    <div class="a" style="left:31px;top:359px;width:1099px;height:275px;background:#fff;border:1px solid #b4bac0"></div>
    <svg class="a" style="left:1116px;top:620px" width="10" height="10" viewBox="0 0 10 10"><g fill="#999"><rect x="8" y="0" width="1" height="1"/><rect x="6" y="2" width="1" height="1"/><rect x="8" y="2" width="1" height="1"/><rect x="4" y="4" width="1" height="1"/><rect x="6" y="4" width="1" height="1"/><rect x="8" y="4" width="1" height="1"/><rect x="2" y="6" width="1" height="1"/><rect x="4" y="6" width="1" height="1"/><rect x="6" y="6" width="1" height="1"/><rect x="8" y="6" width="1" height="1"/></g></svg>
    <!-- smilies -->
    <div class="a nw" style="left:1151px;top:359px;font-size:11px;font-weight:bold;color:#333">Смайлики</div>
    <svg width="0" height="0" style="position:absolute"><defs><radialGradient id="smg" cx=".4" cy=".35" r=".7"><stop offset="0" stop-color="#fff27a"/><stop offset=".5" stop-color="#f7d21c"/><stop offset="1" stop-color="#c89a00"/></radialGradient><radialGradient id="smb" cx=".4" cy=".35" r=".7"><stop offset="0" stop-color="#ffe080"/><stop offset=".6" stop-color="#f58a50"/><stop offset="1" stop-color="#d85a20"/></radialGradient></defs></svg><svg class="a" style="left:1150px;top:376.5px;overflow:visible" width="28" height="28" viewBox="0 0 28 28"><path d="M14,6 L11,2 M14,6 L17,2 M14,6 L14,3" stroke="#5a4000" stroke-width=".9"/><circle cx="14" cy="14" r="8.6" fill="url(#smg)" stroke="#9a7a00" stroke-width=".7"/><ellipse cx="11.5" cy="11" rx="2.1" ry="1.6" fill="#fff" stroke="#3a2a00" stroke-width=".7"/><ellipse cx="16.5" cy="11" rx="2.1" ry="1.6" fill="#fff" stroke="#3a2a00" stroke-width=".7"/><path d="M10,16 Q14,19.5 18,16" stroke="#5a4000" stroke-width=".8" fill="none"/></svg><svg class="a" style="left:1179px;top:376.5px;overflow:visible" width="28" height="28" viewBox="0 0 28 28"><path d="M14,6 L11,2 M14,6 L17,2 M14,6 L14,3" stroke="#5a4000" stroke-width=".9"/><circle cx="14" cy="14" r="8.6" fill="url(#smg)" stroke="#9a7a00" stroke-width=".7"/><ellipse cx="11.5" cy="11" rx="2.1" ry="1.6" fill="#fff" stroke="#3a2a00" stroke-width=".7"/><ellipse cx="16.5" cy="11" rx="2.1" ry="1.6" fill="#fff" stroke="#3a2a00" stroke-width=".7"/><path d="M11,18 Q14,15.5 17,18" stroke="#5a4000" stroke-width=".8" fill="none"/></svg><svg class="a" style="left:1208px;top:377px;overflow:visible" width="28" height="28" viewBox="0 0 28 28"><circle cx="14" cy="14" r="8.6" fill="url(#smg)" stroke="#9a7a00" stroke-width=".7"/><path d="M9,10 Q11,8 13,10 M15,10 Q17,8 19,10" stroke="#5a4000" stroke-width=".8" fill="none"/><path d="M8,14 H20 Q19,20 14,20 Q9,20 8,14 Z" fill="#fff" stroke="#5a4000" stroke-width=".7"/><path d="M12,14 V19.5 M16,14 V19.5" stroke="#5a4000" stroke-width=".5"/></svg><svg class="a" style="left:1237px;top:377px;overflow:visible" width="28" height="28" viewBox="0 0 28 28"><circle cx="14" cy="14" r="8.6" fill="url(#smg)" stroke="#9a7a00" stroke-width=".7"/><path d="M8,9 H13 V19 H8 Q6,14 8,9 Z" fill="#fff" stroke="#5a4000" stroke-width=".7"/><path d="M17,9 Q19,14 17,19" stroke="#5a4000" stroke-width=".8" fill="none"/></svg><svg class="a" style="left:1275px;top:373.5px;overflow:visible" width="28" height="28" viewBox="0 0 28 28"><circle cx="14" cy="14" r="8.6" fill="url(#smg)" stroke="#9a7a00" stroke-width=".7"/><path d="M10,7 H15 V11 H11 Z" fill="#fff" stroke="#5a4000" stroke-width=".6"/></svg><svg class="a" style="left:1304px;top:377px;overflow:visible" width="28" height="28" viewBox="0 0 28 28"><circle cx="14" cy="14" r="8.6" fill="url(#smg)" stroke="#9a7a00" stroke-width=".7"/><path d="M6,11 H22 V13 Q19,16 15,13 H13 Q9,16 6,13 Z" fill="#111"/><path d="M12,19 H16" stroke="#5a4000" stroke-width=".8"/></svg><svg class="a" style="left:1346px;top:373px;overflow:visible" width="28" height="28" viewBox="0 0 28 28"><circle cx="14" cy="14" r="8.6" fill="url(#smg)" stroke="#9a7a00" stroke-width=".7"/><ellipse cx="11.5" cy="11" rx="2.1" ry="1.6" fill="#fff" stroke="#3a2a00" stroke-width=".7"/><ellipse cx="16.5" cy="11" rx="2.1" ry="1.6" fill="#fff" stroke="#3a2a00" stroke-width=".7"/><path d="M10,16 Q14,19.5 18,16" stroke="#5a4000" stroke-width=".8" fill="none"/><path d="M18,3 Q22,1 24,4 Q24,8 20,8 Z" fill="#f0c020" stroke="#9a7a00" stroke-width=".5"/><path d="M4,17 Q6,15 8,18 Q6,21 4,19 Z" fill="#f0c020" stroke="#9a7a00" stroke-width=".5"/></svg><svg class="a" style="left:1157.5px;top:415px;overflow:visible" width="28" height="28" viewBox="0 0 28 28"><circle cx="14" cy="14" r="8.6" fill="url(#smg)" stroke="#9a7a00" stroke-width=".7"/><ellipse cx="11.5" cy="11" rx="2.1" ry="1.6" fill="#fff" stroke="#3a2a00" stroke-width=".7"/><ellipse cx="16.5" cy="11" rx="2.1" ry="1.6" fill="#fff" stroke="#3a2a00" stroke-width=".7"/><path d="M10,16 Q14,19.5 18,16" stroke="#5a4000" stroke-width=".8" fill="none"/><rect x="3" y="15" width="5" height="6" rx="1.5" fill="#f0c020" stroke="#9a7a00" stroke-width=".5"/><rect x="20" y="15" width="5" height="6" rx="1.5" fill="#f0c020" stroke="#9a7a00" stroke-width=".5"/></svg><svg class="a" style="left:1200px;top:414px;overflow:visible" width="28" height="28" viewBox="0 0 28 28"><circle cx="14" cy="14" r="8.6" fill="url(#smb)" stroke="#9a7a00" stroke-width=".7"/><ellipse cx="11.5" cy="11" rx="2.1" ry="1.6" fill="#fff" stroke="#3a2a00" stroke-width=".7"/><ellipse cx="16.5" cy="11" rx="2.1" ry="1.6" fill="#fff" stroke="#3a2a00" stroke-width=".7"/><path d="M10,16 Q14,19.5 18,16" stroke="#5a4000" stroke-width=".8" fill="none"/></svg><svg class="a" style="left:1229px;top:416.5px;overflow:visible" width="28" height="28" viewBox="0 0 28 28"><circle cx="14" cy="14" r="8.6" fill="url(#smg)" stroke="#9a7a00" stroke-width=".7"/><ellipse cx="11.5" cy="11" rx="2.1" ry="1.6" fill="#fff" stroke="#3a2a00" stroke-width=".7"/><ellipse cx="16.5" cy="11" rx="2.1" ry="1.6" fill="#fff" stroke="#3a2a00" stroke-width=".7"/><ellipse cx="11" cy="16.5" rx="2.2" ry="2" fill="#3a1a00"/><path d="M14,18 Q20,14 24,19 Q20,22 15,20 Z" fill="#e040e0"/></svg><svg class="a" style="left:1277.5px;top:415px;overflow:visible" width="28" height="28" viewBox="0 0 28 28"><path d="M6,9 L7,2 L10,7 Z M22,9 L21,2 L18,7 Z" fill="#c02018"/><path d="M25,1 V25 M23,2 V5 Q25,7 27,5 V2" stroke="#6a3a10" stroke-width="1" fill="none"/><circle cx="14" cy="14" r="8.6" fill="#d43a2a" stroke="#9a7a00" stroke-width=".7"/><path d="M9,10 Q11,8 13,10 M15,10 Q17,8 19,10" stroke="#5a4000" stroke-width=".8" fill="none"/><path d="M8,14 H20 Q19,20 14,20 Q9,20 8,14 Z" fill="#fff" stroke="#5a4000" stroke-width=".7"/><path d="M12,14 V19.5 M16,14 V19.5" stroke="#5a4000" stroke-width=".5"/></svg><svg class="a" style="left:1317px;top:418.5px;overflow:visible" width="28" height="28" viewBox="0 0 28 28"><circle cx="14" cy="14" r="8.6" fill="url(#smg)" stroke="#9a7a00" stroke-width=".7"/><ellipse cx="11.5" cy="11" rx="2.1" ry="1.6" fill="#fff" stroke="#3a2a00" stroke-width=".7"/><ellipse cx="16.5" cy="11" rx="2.1" ry="1.6" fill="#fff" stroke="#3a2a00" stroke-width=".7"/><path d="M10,16 Q14,19.5 18,16" stroke="#5a4000" stroke-width=".8" fill="none"/></svg><svg class="a" style="left:1358px;top:412.5px;overflow:visible" width="28" height="28" viewBox="0 0 28 28"><circle cx="14" cy="14" r="8.6" fill="url(#smg)" stroke="#9a7a00" stroke-width=".7"/><ellipse cx="11.5" cy="11" rx="2.1" ry="1.6" fill="#fff" stroke="#3a2a00" stroke-width=".7"/><ellipse cx="16.5" cy="11" rx="2.1" ry="1.6" fill="#fff" stroke="#3a2a00" stroke-width=".7"/><path d="M10,16 Q14,19.5 18,16" stroke="#5a4000" stroke-width=".8" fill="none"/><path d="M4,20 L6,12 L8,18 L10,20 Q8,24 5,23 Z" fill="#f0c020" stroke="#9a7a00" stroke-width=".5"/></svg><svg class="a" style="left:1160.5px;top:460px;overflow:visible" width="28" height="28" viewBox="0 0 28 28"><path d="M14,6 L11,2 M14,6 L17,2 M14,6 L14,3" stroke="#5a4000" stroke-width=".9"/><circle cx="14" cy="14" r="8.6" fill="url(#smg)" stroke="#9a7a00" stroke-width=".7"/><ellipse cx="11.5" cy="11" rx="2.1" ry="1.6" fill="#fff" stroke="#3a2a00" stroke-width=".7"/><ellipse cx="16.5" cy="11" rx="2.1" ry="1.6" fill="#fff" stroke="#3a2a00" stroke-width=".7"/><path d="M10,16 Q14,19.5 18,16" stroke="#5a4000" stroke-width=".8" fill="none"/></svg><svg class="a" style="left:1207.5px;top:462.5px;overflow:visible" width="28" height="28" viewBox="0 0 28 28"><path d="M14,6 L11,2 M14,6 L17,2 M14,6 L14,3" stroke="#5a4000" stroke-width=".9"/><circle cx="14" cy="14" r="8.6" fill="url(#smg)" stroke="#9a7a00" stroke-width=".7"/><ellipse cx="11.5" cy="11" rx="2.1" ry="1.6" fill="#fff" stroke="#3a2a00" stroke-width=".7"/><ellipse cx="16.5" cy="11" rx="2.1" ry="1.6" fill="#fff" stroke="#3a2a00" stroke-width=".7"/><path d="M10,16 Q14,19.5 18,16" stroke="#5a4000" stroke-width=".8" fill="none"/><rect x="6" y="16" width="6" height="8" fill="#f0c020" stroke="#fff" stroke-width=".8"/></svg><svg class="a" style="left:1223px;top:464px;overflow:visible" width="28" height="28" viewBox="0 0 28 28"><path d="M14,6 L11,2 M14,6 L17,2 M14,6 L14,3" stroke="#5a4000" stroke-width=".9"/><circle cx="14" cy="14" r="8.6" fill="url(#smg)" stroke="#9a7a00" stroke-width=".7"/><ellipse cx="11.5" cy="11" rx="2.1" ry="1.6" fill="#fff" stroke="#3a2a00" stroke-width=".7"/><ellipse cx="16.5" cy="11" rx="2.1" ry="1.6" fill="#fff" stroke="#3a2a00" stroke-width=".7"/><path d="M10,16 Q14,19.5 18,16" stroke="#5a4000" stroke-width=".8" fill="none"/><rect x="16" y="16" width="6" height="8" fill="#f0c020" stroke="#fff" stroke-width=".8"/></svg><svg class="a" style="left:1259.5px;top:466.5px;overflow:visible" width="28" height="28" viewBox="0 0 28 28"><circle cx="14" cy="14" r="8.6" fill="url(#smg)" stroke="#9a7a00" stroke-width=".7"/><ellipse cx="11.5" cy="11" rx="2.1" ry="1.6" fill="#fff" stroke="#3a2a00" stroke-width=".7"/><ellipse cx="16.5" cy="11" rx="2.1" ry="1.6" fill="#fff" stroke="#3a2a00" stroke-width=".7"/><path d="M10,16 Q14,19.5 18,16" stroke="#5a4000" stroke-width=".8" fill="none"/><path d="M17,5 Q24,4 24,12 Q24,20 21,22 Q18,16 17,5 Z" fill="#f4f0e0" stroke="#a09a80" stroke-width=".6"/></svg><svg class="a" style="left:1295.5px;top:466.5px;overflow:visible" width="28" height="28" viewBox="0 0 28 28"><circle cx="14" cy="14" r="8.6" fill="url(#smg)" stroke="#9a7a00" stroke-width=".7"/><ellipse cx="11.5" cy="11" rx="2.1" ry="1.6" fill="#fff" stroke="#3a2a00" stroke-width=".7"/><ellipse cx="16.5" cy="11" rx="2.1" ry="1.6" fill="#fff" stroke="#3a2a00" stroke-width=".7"/><path d="M12,19 H16" stroke="#5a4000" stroke-width=".8"/></svg>
    <div class="a nw" style="left:1151px;top:496px;font-size:11px;color:#105289">Ещё смайлики…</div>
    <div class="a" style="left:1151px;top:513px;width:246px;height:1px;background:#ccc"></div>
    <div class="a" style="left:1151px;top:519px;font-size:11px;line-height:12px;color:#333;white-space:nowrap"><span style="color:#105289">BBCode</span> <i>ВКЛЮЧЁН</i><br>[img] <i>ВКЛЮЧЁН</i><br>[flash] <i>ВЫКЛЮЧЕН</i><br>[url] <i>ВКЛЮЧЁН</i><br>Смайлики <i>ВКЛЮЧЕНЫ</i></div>
    <div class="a" style="left:1151px;top:584px;width:246px;height:1px;background:#ccc"></div>
    <div class="a nw" style="left:1151px;top:589px;font-size:11px;font-weight:bold;color:#105289">Обзор темы</div>
    <!-- next box -->
    <div class="a" style="left:21px;top:647px;width:1386px;height:40px;border-radius:7px;background:#e1ebf2"></div>
    <!-- scrollbar -->
    <div class="a" style="left:1426px;top:0;width:15px;height:657px;background:#fafafa"></div>
    <svg class="a" style="left:1430px;top:3px" width="8" height="7" viewBox="0 0 8 7"><path d="M4,0 L8,7 H0 Z" fill="#8a8a8a"/></svg>
    <div class="a" style="left:1429px;top:15px;width:10px;height:630px;border-radius:5px;background:linear-gradient(90deg,#c4c4c4,#d6d6d6)"></div>
    <div class="a" style="left:1429px;top:15px;width:10px;height:298px;border-radius:5px;background:#efefef;border:1px solid #9a9a9a"></div>
    <svg class="a" style="left:1430px;top:647px" width="8" height="7" viewBox="0 0 8 7"><path d="M0,0 H8 L4,7 Z" fill="#8a8a8a"/></svg>
  </div>
  <!-- notification bar -->
  <div class="a" style="left:0;top:750px;width:1442px;height:35px;background:#efefef;border-top:1px solid #dedede"></div>
  <svg class="a" style="left:7px;top:759px" width="18" height="18" viewBox="0 0 18 18"><defs><radialGradient id="infg" cx=".4" cy=".3" r=".7"><stop offset="0" stop-color="#6aa4d4"/><stop offset="1" stop-color="#2a62a0"/></radialGradient></defs><circle cx="9" cy="9" r="8" fill="url(#infg)" stroke="#245488" stroke-width=".8"/><circle cx="9.8" cy="4.8" r="1.3" fill="#fff"/><path d="M8.3,7.5 H10.3 L9.4,13.5 H7.4 Z" fill="#fff"/></svg>
  <div class="a nw" style="left:31px;top:760px;font-size:14px;color:#3e3e3e;letter-spacing:.237px">Firefox автоматически отправляет некоторые данные в Mozilla, чтобы мы могли улучшить вашу работу в браузере.</div>
  <div class="a" style="left:1198px;top:752px;width:210px;height:31px;border:1px solid #a8a8a8;border-radius:3px;background:linear-gradient(#fff,#ececec)"></div>
  <div class="a nw" style="left:1203px;top:760px;font-size:14px;color:#3e3e3e;letter-spacing:.15px">Выбр<u>а</u>ть, чем мне поделиться</div>
  <svg class="a" style="left:1422px;top:763px" width="10" height="10" viewBox="0 0 10 10"><path d="M1,1 L9,9 M9,1 L1,9" stroke="#333" stroke-width="1.6"/></svg>
</div>
<div id="dlg">
<div class="title"><div class="a nw" style="left:325px;top:5px;font-weight:bold;font-size:14px;color:#3a3a3a;letter-spacing:.65px">Дополнительные параметры</div>
<div class="wb" style="left:864px;width:39px;border-radius:0 0 4px 4px"><div class="a" style="left:14px;top:9px;width:10px;height:4px;border:1px solid #666"></div></div>
<div class="wb" style="left:903px;width:39px;border-radius:0 0 4px 4px"><div class="a" style="left:13px;top:3px;width:11px;height:10px;border:1px solid #666"><div class="a" style="left:2px;top:2px;width:5px;height:4px;border:1px solid #666"></div></div></div>
<div class="wb" style="left:942px;width:39px;border-color:#a82828;background:linear-gradient(#f07a7a,#e24848 45%,#d83838);border-radius:0 0 4px 4px"><svg class="a" style="left:12px;top:2px" width="13" height="12" viewBox="0 0 13 12"><path d="M2,1.5 L11,10.5 M11,1.5 L2,10.5" stroke="#8a1a1a" stroke-width="4" opacity=".5"/><path d="M2,1.5 L11,10.5 M11,1.5 L2,10.5" stroke="#fff" stroke-width="2.8"/></svg></div>
</div>
<div class="tb"><div class="a" style="left:769px;top:9px;width:209px;height:29px;background:#fff;border:1px solid #b0b0b0;border-radius:3px;box-shadow:inset 0 1px 1px rgba(0,0,0,.06)"><svg class="a" style="left:184px;top:6px" width="16" height="16" viewBox="0 0 16 16"><circle cx="6.5" cy="6.5" r="4.3" fill="none" stroke="#9a9a9a" stroke-width="2"/><path d="M9.7,9.7 L14,14" stroke="#9a9a9a" stroke-width="2.6" stroke-linecap="round"/></svg></div></div>
<div class="side">
<div class="it" style="top:7px;left:4px;letter-spacing:.35px">Ввод</div>
<div class="it" style="top:36px;left:4px;letter-spacing:.35px">Мышь</div>
<div class="it" style="top:65px;left:4px;letter-spacing:.35px">Окна</div>
<div class="it" style="top:94px;left:4px;letter-spacing:.35px">Окружение</div>
<div class="it" style="top:123px;left:4px;letter-spacing:.35px">Рабочий стол</div>
<div class="a" style="left:0;top:145px;width:148px;height:29px;background:linear-gradient(#bcdaf5,#9cc4ea 60%,#8ab8e4);border-top:1px solid #5f98d0;border-bottom:1px solid #6fa3d6"></div>
<div class="it" style="top:152px;color:#fff;left:4px;letter-spacing:.15px">Расширения Shell</div>
<div class="it" style="top:181px;left:4px;letter-spacing:.35px">Тема</div>
<div class="it" style="top:210px;left:4px;letter-spacing:.35px">Файлы</div>
<div class="it" style="top:239px;left:4px;letter-spacing:1.05px">Шрифты</div>
</div>
<div class="row" style="top:87px;letter-spacing:0.914px">Alternatetab</div>
<div class="gear" style="top:87px"><svg class="a" style="left:-1px;top:-1px" width="16" height="16" viewBox="0 0 16 16"><g stroke="#727272" stroke-linecap="round" fill="none"><path d="M3.8,12.4 L6.4,9.8" stroke-width="3"/><path d="M6.4,9.8 L11.6,4.6" stroke-width="1.5"/><path d="M11.2,5 L12.6,3.6" stroke-width="2.4"/><path d="M6.6,6.6 L12.2,12.2" stroke-width="2.3"/></g><circle cx="5.6" cy="5.6" r="2.9" fill="#727272"/><path d="M2.6,3.6 L5.4,5.6 L3.6,2.6" stroke="#e6e6e6" stroke-width="1.6" fill="#e6e6e6"/></svg></div>
<div class="sw off" style="top:84px"><div class="k"></div><svg class="a" style="left:46px;top:5px" width="12" height="11" viewBox="0 0 12 11"><ellipse cx="6" cy="5.5" rx="4.4" ry="4.3" fill="none" stroke="#333" stroke-width="1.5"/></svg></div>
<div class="row" style="top:121px;letter-spacing:0.550px">Alternative status menu</div>
<div class="sw on" style="top:118px"><div class="bl"></div><div class="k"></div></div>
<div class="row" style="top:155px;letter-spacing:0.300px">Applications menu</div>
<div class="sw off" style="top:152px"><div class="k"></div><svg class="a" style="left:46px;top:5px" width="12" height="11" viewBox="0 0 12 11"><ellipse cx="6" cy="5.5" rx="4.4" ry="4.3" fill="none" stroke="#333" stroke-width="1.5"/></svg></div>
<div class="row" style="top:189px;letter-spacing:0.368px">Dash to dock</div>
<div class="gear" style="top:189px"><svg class="a" style="left:-1px;top:-1px" width="16" height="16" viewBox="0 0 16 16"><g stroke="#727272" stroke-linecap="round" fill="none"><path d="M3.8,12.4 L6.4,9.8" stroke-width="3"/><path d="M6.4,9.8 L11.6,4.6" stroke-width="1.5"/><path d="M11.2,5 L12.6,3.6" stroke-width="2.4"/><path d="M6.6,6.6 L12.2,12.2" stroke-width="2.3"/></g><circle cx="5.6" cy="5.6" r="2.9" fill="#727272"/><path d="M2.6,3.6 L5.4,5.6 L3.6,2.6" stroke="#e6e6e6" stroke-width="1.6" fill="#e6e6e6"/></svg></div>
<div class="sw on" style="top:186px"><div class="bl"></div><div class="k"></div></div>
<div class="row" style="top:223px;letter-spacing:0.650px">Desktop shortcuts</div>
<div class="sw on" style="top:220px"><div class="bl"></div><div class="k"></div></div>
<div class="row" style="top:257px;letter-spacing:0.609px">Drop down terminal</div>
<div class="gear" style="top:257px"><svg class="a" style="left:-1px;top:-1px" width="16" height="16" viewBox="0 0 16 16"><g stroke="#727272" stroke-linecap="round" fill="none"><path d="M3.8,12.4 L6.4,9.8" stroke-width="3"/><path d="M6.4,9.8 L11.6,4.6" stroke-width="1.5"/><path d="M11.2,5 L12.6,3.6" stroke-width="2.4"/><path d="M6.6,6.6 L12.2,12.2" stroke-width="2.3"/></g><circle cx="5.6" cy="5.6" r="2.9" fill="#727272"/><path d="M2.6,3.6 L5.4,5.6 L3.6,2.6" stroke="#e6e6e6" stroke-width="1.6" fill="#e6e6e6"/></svg></div>
<div class="sw off" style="top:254px"><div class="k"></div><svg class="a" style="left:46px;top:5px" width="12" height="11" viewBox="0 0 12 11"><ellipse cx="6" cy="5.5" rx="4.4" ry="4.3" fill="none" stroke="#333" stroke-width="1.5"/></svg></div>
<div class="row" style="top:291px;letter-spacing:0.272px">Launch new instance</div>
<div class="sw off" style="top:288px"><div class="k"></div><svg class="a" style="left:46px;top:5px" width="12" height="11" viewBox="0 0 12 11"><ellipse cx="6" cy="5.5" rx="4.4" ry="4.3" fill="none" stroke="#333" stroke-width="1.5"/></svg></div>
<div class="row" style="top:325px;letter-spacing:0.750px">No topleft hot corner</div>
<div class="sw off" style="top:322px"><div class="k"></div><svg class="a" style="left:46px;top:5px" width="12" height="11" viewBox="0 0 12 11"><ellipse cx="6" cy="5.5" rx="4.4" ry="4.3" fill="none" stroke="#333" stroke-width="1.5"/></svg></div>
<div class="row" style="top:359px;letter-spacing:0.550px">Notifications alert</div>
<div class="gear" style="top:359px"><svg class="a" style="left:-1px;top:-1px" width="16" height="16" viewBox="0 0 16 16"><g stroke="#727272" stroke-linecap="round" fill="none"><path d="M3.8,12.4 L6.4,9.8" stroke-width="3"/><path d="M6.4,9.8 L11.6,4.6" stroke-width="1.5"/><path d="M11.2,5 L12.6,3.6" stroke-width="2.4"/><path d="M6.6,6.6 L12.2,12.2" stroke-width="2.3"/></g><circle cx="5.6" cy="5.6" r="2.9" fill="#727272"/><path d="M2.6,3.6 L5.4,5.6 L3.6,2.6" stroke="#e6e6e6" stroke-width="1.6" fill="#e6e6e6"/></svg></div>
<div class="sw on" style="top:356px"><div class="bl"></div><div class="k"></div></div>
<div class="row" style="top:393px;letter-spacing:0.391px">Places status indicator</div>
<div class="sw off" style="top:390px"><div class="k"></div><svg class="a" style="left:46px;top:5px" width="12" height="11" viewBox="0 0 12 11"><ellipse cx="6" cy="5.5" rx="4.4" ry="4.3" fill="none" stroke="#333" stroke-width="1.5"/></svg></div>
<div class="row" style="top:427px;letter-spacing:0.150px">Rosa hotkeys</div>
<div class="sw on" style="top:424px"><div class="bl"></div><div class="k"></div></div>
<div class="row" style="top:461px;letter-spacing:0.283px">Screenpen launch</div>
<div class="sw off" style="top:458px"><div class="k"></div><svg class="a" style="left:46px;top:5px" width="12" height="11" viewBox="0 0 12 11"><ellipse cx="6" cy="5.5" rx="4.4" ry="4.3" fill="none" stroke="#333" stroke-width="1.5"/></svg></div>
<div class="row" style="top:495px;letter-spacing:0.363px">Skype integration</div>
<div class="gear" style="top:495px"><svg class="a" style="left:-1px;top:-1px" width="16" height="16" viewBox="0 0 16 16"><g stroke="#727272" stroke-linecap="round" fill="none"><path d="M3.8,12.4 L6.4,9.8" stroke-width="3"/><path d="M6.4,9.8 L11.6,4.6" stroke-width="1.5"/><path d="M11.2,5 L12.6,3.6" stroke-width="2.4"/><path d="M6.6,6.6 L12.2,12.2" stroke-width="2.3"/></g><circle cx="5.6" cy="5.6" r="2.9" fill="#727272"/><path d="M2.6,3.6 L5.4,5.6 L3.6,2.6" stroke="#e6e6e6" stroke-width="1.6" fill="#e6e6e6"/></svg></div>
<div class="sw on" style="top:492px"><div class="bl"></div><div class="k"></div></div>
<div class="row" style="top:529px;letter-spacing:0.410px">User themes</div>
<div class="sw on" style="top:526px"><div class="bl"></div><div class="k"></div></div>
<div class="row" style="top:563px;letter-spacing:0.883px">Weather</div>
<div class="gear" style="top:563px"><svg class="a" style="left:-1px;top:-1px" width="16" height="16" viewBox="0 0 16 16"><g stroke="#727272" stroke-linecap="round" fill="none"><path d="M3.8,12.4 L6.4,9.8" stroke-width="3"/><path d="M6.4,9.8 L11.6,4.6" stroke-width="1.5"/><path d="M11.2,5 L12.6,3.6" stroke-width="2.4"/><path d="M6.6,6.6 L12.2,12.2" stroke-width="2.3"/></g><circle cx="5.6" cy="5.6" r="2.9" fill="#727272"/><path d="M2.6,3.6 L5.4,5.6 L3.6,2.6" stroke="#e6e6e6" stroke-width="1.6" fill="#e6e6e6"/></svg></div>
<div class="sw on" style="top:560px"><div class="bl"></div><div class="k"></div></div>
<div class="row" style="top:597px;letter-spacing:0.583px">Win key for help</div>
<div class="sw on" style="top:594px"><div class="bl"></div><div class="k"></div></div>
<div class="row" style="top:631px;letter-spacing:0.750px">Window list</div>
<div class="gear" style="top:631px"><svg class="a" style="left:-1px;top:-1px" width="16" height="16" viewBox="0 0 16 16"><g stroke="#727272" stroke-linecap="round" fill="none"><path d="M3.8,12.4 L6.4,9.8" stroke-width="3"/><path d="M6.4,9.8 L11.6,4.6" stroke-width="1.5"/><path d="M11.2,5 L12.6,3.6" stroke-width="2.4"/><path d="M6.6,6.6 L12.2,12.2" stroke-width="2.3"/></g><circle cx="5.6" cy="5.6" r="2.9" fill="#727272"/><path d="M2.6,3.6 L5.4,5.6 L3.6,2.6" stroke="#e6e6e6" stroke-width="1.6" fill="#e6e6e6"/></svg></div>
<div class="sw off" style="top:628px"><div class="k"></div><svg class="a" style="left:46px;top:5px" width="12" height="11" viewBox="0 0 12 11"><ellipse cx="6" cy="5.5" rx="4.4" ry="4.3" fill="none" stroke="#333" stroke-width="1.5"/></svg></div>
<div class="row" style="top:669px;letter-spacing:.17px">Установить расширение Shell</div>
<div class="a nw" style="left:628px;top:669px;font-size:14px;color:#4a8ce0;text-decoration:underline;letter-spacing:.07px">Загрузить дополнительные расширения</div>
<div class="a" style="left:901px;top:661px;width:75px;height:32px;border:1px solid #b0b0b0;border-radius:3px;background:linear-gradient(#fdfdfd,#e9e9e9)"><div class="a nw" style="left:8px;top:7px;font-size:14px;color:#333">(Нет)</div><div class="a" style="left:48px;top:4px;width:1px;height:22px;background:#c0c0c0"></div><svg class="a" style="left:53px;top:6px" width="17" height="17" viewBox="0 0 17 17"><rect x="1" y="1.5" width="13" height="13" rx="1" fill="#fafafa" stroke="#aaa" stroke-width=".7"/><rect x="2" y="8" width="14" height="7.5" fill="#7aa4d4" stroke="#4a74a8" stroke-width=".8"/><path d="M8.5,0.5 L13,5 H10.5 V8.5 H6.5 V5 H4 Z" fill="#a8d850" stroke="#5a9a20" stroke-width=".7"/></svg></div>
</div>
</body></html>
